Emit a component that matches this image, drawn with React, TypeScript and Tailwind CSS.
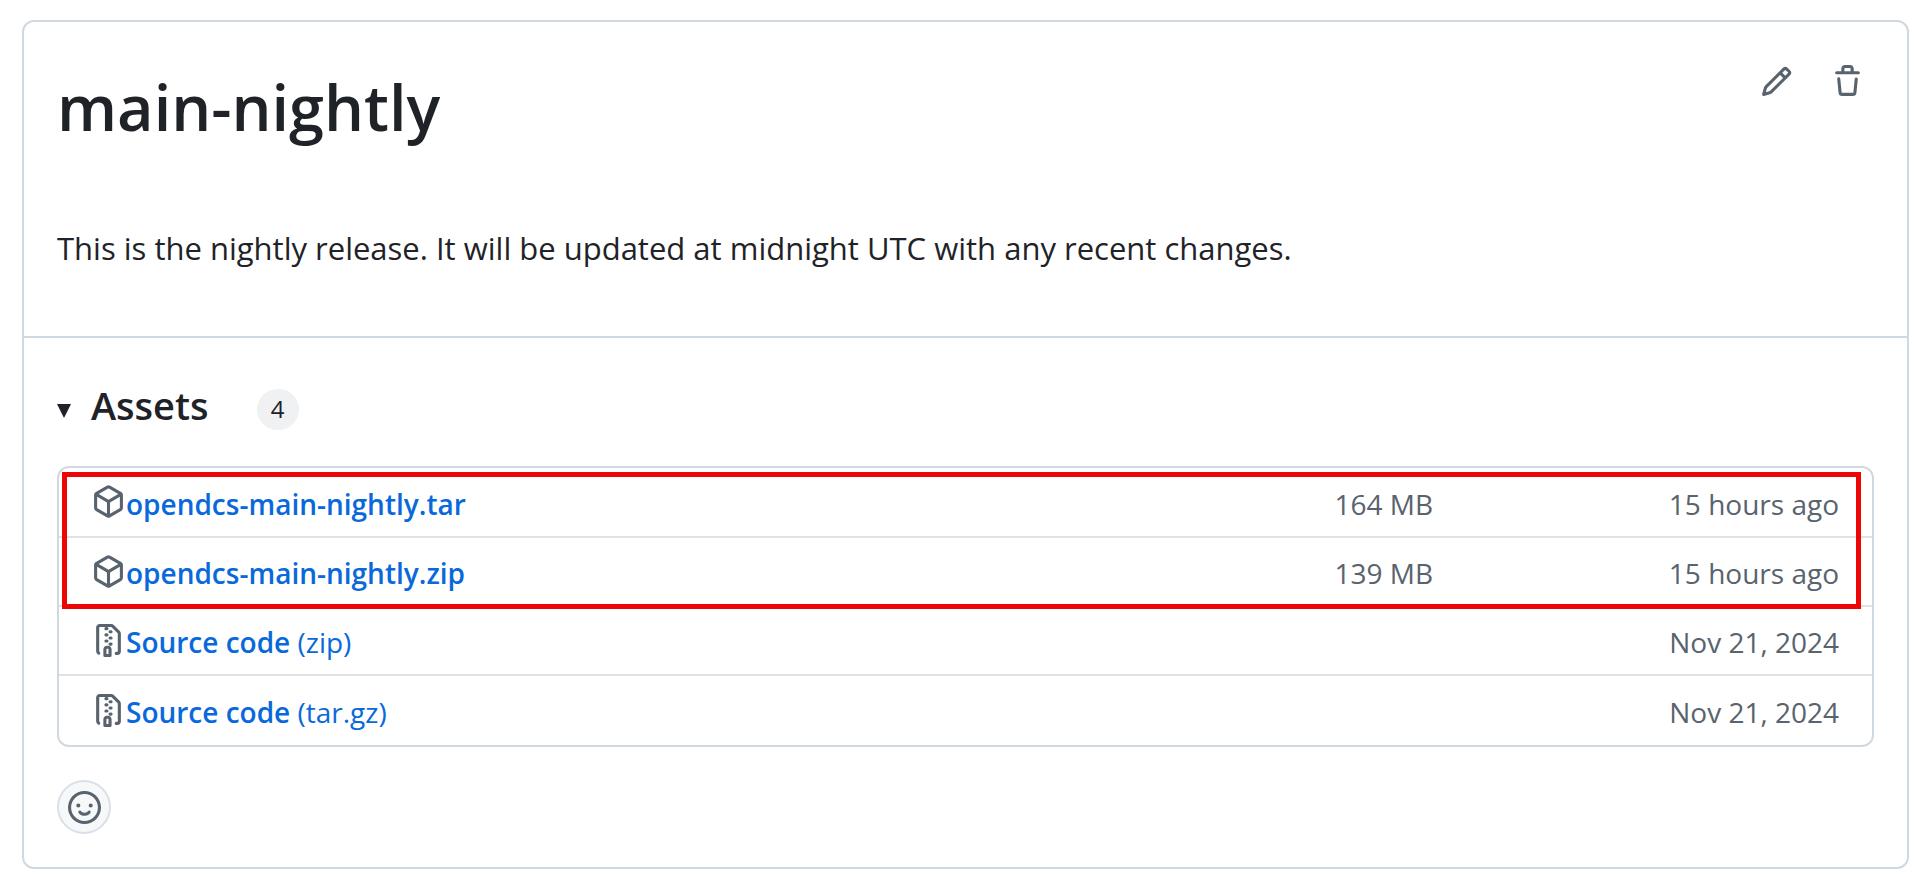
type IconName = 'pencil' | 'trash' | 'package' | 'zip' | 'smiley';

const iconPaths: Record<IconName, string> = {
  pencil:
    'M11.013 1.427a1.75 1.75 0 0 1 2.474 0l1.086 1.086a1.75 1.75 0 0 1 0 2.474l-8.61 8.61c-.21.21-.47.364-.756.445l-3.251.93a.75.75 0 0 1-.927-.928l.929-3.25c.081-.286.235-.547.445-.758l8.61-8.61Zm.176 4.823L9.75 4.81l-6.286 6.287a.253.253 0 0 0-.064.108l-.558 1.953 1.953-.558a.253.253 0 0 0 .108-.064Zm1.238-3.763a.25.25 0 0 0-.354 0L10.811 3.75l1.439 1.44 1.263-1.263a.25.25 0 0 0 0-.354Z',
  trash:
    'M11 1.75V3h2.25a.75.75 0 0 1 0 1.5H2.75a.75.75 0 0 1 0-1.5H5V1.75C5 .784 5.784 0 6.75 0h2.5C10.216 0 11 .784 11 1.75ZM4.496 6.675l.66 6.6a.25.25 0 0 0 .249.225h5.19a.25.25 0 0 0 .249-.225l.66-6.6a.75.75 0 0 1 1.492.149l-.66 6.6A1.748 1.748 0 0 1 10.595 15h-5.19a1.75 1.75 0 0 1-1.741-1.575l-.66-6.6a.75.75 0 1 1 1.492-.15ZM6.5 1.75V3h3V1.75a.25.25 0 0 0-.25-.25h-2.5a.25.25 0 0 0-.25.25Z',
  package:
    'm8.878.392 5.25 3.045c.54.314.872.89.872 1.514v6.098a1.75 1.75 0 0 1-.872 1.514l-5.25 3.045a1.75 1.75 0 0 1-1.756 0l-5.25-3.045A1.75 1.75 0 0 1 1 11.049V4.951c0-.624.332-1.201.872-1.514L7.122.392a1.75 1.75 0 0 1 1.756 0ZM7.875 1.69l-4.63 2.685L8 7.133l4.755-2.758-4.63-2.685a.248.248 0 0 0-.25 0ZM2.5 5.677v5.372c0 .09.047.171.125.216l4.625 2.683V8.432Zm6.25 8.271 4.625-2.683a.25.25 0 0 0 .125-.216V5.677L8.75 8.432Z',
  zip: 'M3.5 1.75v11.5c0 .09.048.173.126.217a.75.75 0 0 1-.752 1.298A1.748 1.748 0 0 1 2 13.25V1.75C2 .784 2.784 0 3.75 0h5.586c.464 0 .909.185 1.237.513l2.914 2.914c.329.328.513.773.513 1.237v8.586A1.75 1.75 0 0 1 12.25 15h-.5a.75.75 0 0 1 0-1.5h.5a.25.25 0 0 0 .25-.25V4.664a.25.25 0 0 0-.073-.177L9.513 1.573a.25.25 0 0 0-.177-.073H7.25a.75.75 0 0 1 0 1.5h-.5a.75.75 0 0 1 0-1.5h-3a.25.25 0 0 0-.25.25Zm3.75 8.75h.5c.966 0 1.75.784 1.75 1.75v3a.75.75 0 0 1-.75.75h-2.5a.75.75 0 0 1-.75-.75v-3c0-.966.784-1.75 1.75-1.75ZM6 5.25a.75.75 0 0 1 .75-.75h.5a.75.75 0 0 1 0 1.5h-.5A.75.75 0 0 1 6 5.25Zm.75 2.25h.5a.75.75 0 0 1 0 1.5h-.5a.75.75 0 0 1 0-1.5ZM8 6.75A.75.75 0 0 1 8.75 6h.5a.75.75 0 0 1 0 1.5h-.5A.75.75 0 0 1 8 6.75ZM8.75 3h.5a.75.75 0 0 1 0 1.5h-.5a.75.75 0 0 1 0-1.5ZM8 9.75A.75.75 0 0 1 8.75 9h.5a.75.75 0 0 1 0 1.5h-.5A.75.75 0 0 1 8 9.75Zm-1 2.5v2.25h1v-2.25a.25.25 0 0 0-.25-.25h-.5a.25.25 0 0 0-.25.25Z',
  smiley:
    'M8 0a8 8 0 1 1 0 16A8 8 0 0 1 8 0ZM1.5 8a6.5 6.5 0 1 0 13 0 6.5 6.5 0 0 0-13 0Zm3.82 1.636a.75.75 0 0 1 1.038.175l.007.009c.103.118.22.222.35.31.264.178.683.37 1.285.37.602 0 1.02-.192 1.285-.371.13-.088.247-.192.35-.31l.007-.008a.75.75 0 0 1 1.222.87c-.05.07-.11.15-.204.252-.16.166-.338.316-.53.445-.63.418-1.37.638-2.13.612-.946 0-1.652-.308-2.126-.63a3.331 3.331 0 0 1-.715-.657l-.02-.03a.75.75 0 0 1 .183-1.044ZM12 7a1 1 0 1 1-2 0 1 1 0 0 1 2 0ZM5 8a1 1 0 1 1 0-2 1 1 0 0 1 0 2Z',
};

function Icon({ name }: { name: IconName }) {
  return (
    <svg viewBox="0 0 16 16" className="size-[33px] shrink-0 fill-[#59636e]" aria-hidden="true">
      <path d={iconPaths[name]} />
    </svg>
  );
}

type Asset = { icon: IconName; name: string; format?: string; size?: string; time: string };

const assets: Asset[] = [
  { icon: 'package', name: 'opendcs-main-nightly.tar', size: '164 MB', time: '15 hours ago' },
  { icon: 'package', name: 'opendcs-main-nightly.zip', size: '139 MB', time: '15 hours ago' },
  { icon: 'zip', name: 'Source code', format: '(zip)', time: 'Nov 21, 2024' },
  { icon: 'zip', name: 'Source code', format: '(tar.gz)', time: 'Nov 21, 2024' },
];

function AssetRow({ asset }: { asset: Asset }) {
  return (
    <li className="flex h-[69px] items-center border-t-2 border-[#dee3e8] px-[33px] pt-[3px] text-[28px] leading-10 text-[#59636e] first:h-[68px] first:border-t-0 last:h-[71px]">
      <div className="flex min-w-0 flex-1 items-center">
        <div className="pb-1">
          <Icon name={asset.icon} />
        </div>
        <a href="#" className="truncate pl-px text-[#0969da]">
          <span className="font-semibold">{asset.name}</span>
          {asset.format && <span> {asset.format}</span>}
        </a>
      </div>
      <span className="whitespace-nowrap">{asset.size}</span>
      <span className="w-[406px] text-right whitespace-nowrap">{asset.time}</span>
    </li>
  );
}

export default function App() {
  return (
    <main className="bg-white pt-5 pr-[14px] pb-[15px] pl-[22px] font-['Open_Sans','Noto_Sans',sans-serif] text-[#1f2328]">
      <article className="rounded-xl border-2 border-[#d1d9e0]">
        <section className="border-b-2 border-[#d1d9e0] px-[33px] pt-[37px] pb-16">
          <header className="flex items-start justify-between">
            <h1 className="text-[63px] leading-[96px] font-semibold">main-nightly</h1>
            <div className="flex gap-[38px] pt-[6px] pr-[10px]">
              <button type="button" aria-label="Edit release">
                <Icon name="pencil" />
              </button>
              <button type="button" aria-label="Delete release">
                <Icon name="trash" />
              </button>
            </div>
          </header>
          <p className="mt-[69px] text-[31px] leading-[48px]">
            This is the nightly release. It will be updated at midnight UTC with any recent changes.
          </p>
        </section>
        <section className="px-[33px] pt-[37px] pb-[33px]">
          <details open>
            <summary className="flex cursor-pointer list-none items-center">
              <svg viewBox="0 0 14 14" className="mt-3 size-[14px] fill-[#1f2328]" aria-hidden="true">
                <path d="M0 0h14L7 14Z" />
              </svg>
              <h2 className="ml-5 text-[38px] leading-[60px] font-semibold">Assets</h2>
              <span className="mt-2 ml-12 flex h-[41px] min-w-[42px] items-center justify-center rounded-full bg-[#eff1f3] px-3 text-2xl">
                4
              </span>
            </summary>
            <div className="relative mt-[31px]">
              <ul className="rounded-xl border-2 border-[#d1d9e0]">
                {assets.map((asset) => (
                  <AssetRow key={asset.name + (asset.format ?? '')} asset={asset} />
                ))}
              </ul>
              <div className="pointer-events-none absolute top-[6px] right-[13px] left-[5px] h-[137px] border-5 border-[#ec0606]" />
            </div>
          </details>
          <button
            type="button"
            aria-label="Add reaction"
            className="mt-[33px] flex size-[54px] items-center justify-center rounded-full border-2 border-[#dae0e7] bg-[#f6f8fa]"
          >
            <Icon name="smiley" />
          </button>
        </section>
      </article>
    </main>
  );
}
